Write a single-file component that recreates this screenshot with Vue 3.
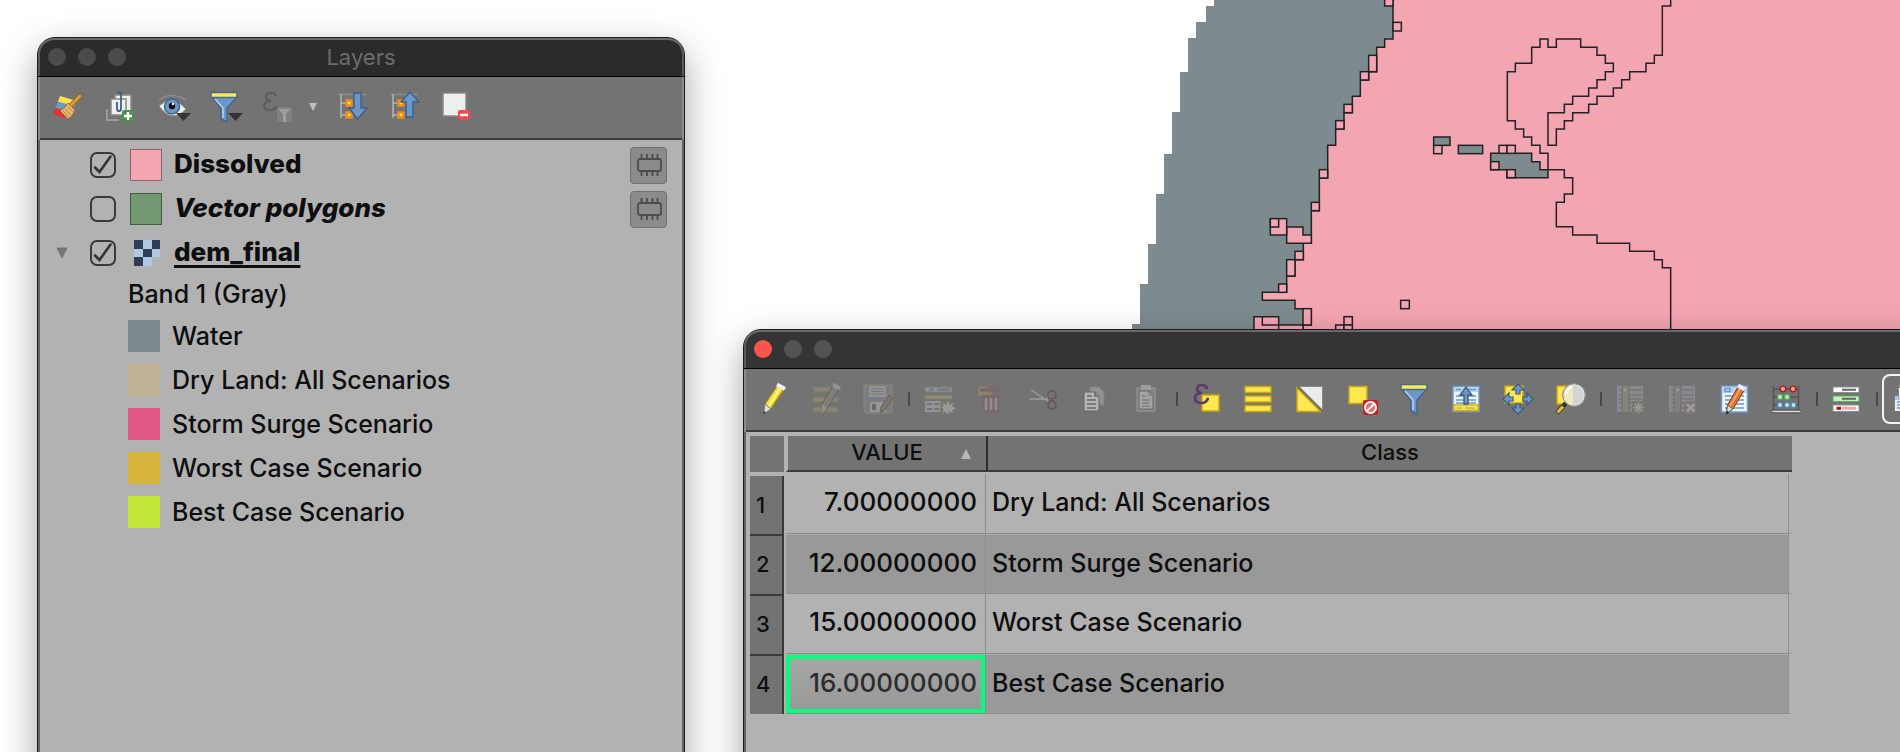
<script setup>
import { ref } from 'vue'

const layers = ref([
  { name: 'Dissolved', on: true, fill: '#f4a5b2', kind: 'solid', temp: true },
  { name: 'Vector polygons', on: false, fill: '#72996f', kind: 'empty', temp: true },
  { name: 'dem_final', on: true, kind: 'raster', temp: false }
])

const classes = [
  { label: 'Water', color: '#7d8b8f' },
  { label: 'Dry Land: All Scenarios', color: '#beb297' },
  { label: 'Storm Surge Scenario', color: '#e15989' },
  { label: 'Worst Case Scenario', color: '#d7b43a' },
  { label: 'Best Case Scenario', color: '#c4e83a' }
]

const rows = [
  { value: '7.00000000', name: 'Dry Land: All Scenarios' },
  { value: '12.00000000', name: 'Storm Surge Scenario' },
  { value: '15.00000000', name: 'Worst Case Scenario' },
  { value: '16.00000000', name: 'Best Case Scenario' }
]
const current = 3

const shoreCells = [
  [854, -8, 25, 26], [879, 67, 25, 26], [806, 166, 24, 49], [781, 215, 25, 25],
  [732, 313, 25, 25], [707, 362, 25, 25], [658, 509, 25, 25], [634, 607, 24, 25],
  [585, 754, 25, 25], [560, 779, 25, 49], [536, 852, 24, 25], [902, 901, 26, 25],
  [732, 950, 25, 25], [707, 975, 25, 25], [732, 975, 25, 25], [609, 926, 25, 49],
  [511, 656, 49, 49], [511, 656, 25, 25], [1001, 436, 25, 25]
]
const lakeCells = [[272, 485, 25, 24], [321, 509, 25, 24], [297, 436, 24, 24], [321, 436, 25, 24]]
</script>

<template>
  <main class="desktop">
    <svg class="map" aria-hidden="true">
      <g transform="translate(1100 0) scale(0.33333)" stroke-width="4.5">
        <path fill="#7d8b8e" d="M342 0V18H318V66H288V114H264V216H240V336H216V462H192V582H168V732H144V852H120V972H96V1100H900V0Z" />
        <path class="land" d="M879 -10V117H854V142H830V215H806V240H781V289H757V338H732V387H707V436H683V534H658V632H634V730H610V779H585V828H560V877H487V901H585V926H634V975H609V1100H9000V-10Z" />
        <path class="land" d="M560 681H609V705H634V730H560Z" />
        <path class="land" d="M462 1100V950H536V975H609V1100" />
        <path class="line" d="M487 950V975H536V1100" />
        <rect v-for="(c, i) in shoreCells" :key="i" class="land" :x="c[0]" :y="c[1]" :width="c[2]" :height="c[3]" />
        <rect class="lake" x="1001" y="411" width="49" height="25" />
        <rect class="lake" x="1075" y="436" width="73" height="25" />
        <g transform="translate(900 0)">
          <path class="lake" d="M272 460H395V485H420V509H444V533H321V509H272Z" />
          <rect v-for="(c, i) in lakeCells" :key="i" class="land" :x="c[0]" :y="c[1]" :width="c[2]" :height="c[3]" />
          <path class="line" d="M444 509V460H420V436H395V411H371V387H346V362H322V215H346V190H395V142H420V117H444V142H469V117H542V142H591V166H616V190H640V215H616V239H591V264H566V289H518V313H493V338H444V436H469V387H493V362H518V338H566V313H591V289H640V264H665V239H689V215H738V190H763V166H787V18H812V-5" />
          <path class="line" d="M444 509H493V533H518V582H493V607H469V680H518V705H591V730H689V754H763V779H787V803H812V1100" />
        </g>
      </g>
    </svg>

    <section class="window layers" aria-label="Layers">
      <header class="title">
        <span class="lights"><i></i><i></i><i></i></span>
        <h1>Layers</h1>
      </header>
      <div class="tools" role="toolbar" aria-label="Layer tools">
        <button type="button" aria-label="Open layer styling">
          <svg viewBox="0 0 32 32">
            <path d="M8 5 25 10 22 15 6 11Z" fill="#fbe44a" />
            <path d="M6 11 22 15 18 21 3 17Z" fill="#6d97c8" />
            <path d="M3 17 16 20 13 27 1 23Z" fill="#e8302c" />
            <path d="M28 5 19 14" stroke="#9a5d14" stroke-width="4.5" stroke-linecap="round" />
            <path d="M28 5 19 14" stroke="#dfa040" stroke-width="2.5" stroke-linecap="round" />
            <path d="M16 12 23 19 20 25 16 28 8 20 12 17Z" fill="#e6b673" stroke="#9a682c" />
            <path d="M13 18 19 24M11 20 17 26M16 16 21 21" stroke="#b98543" />
          </svg>
        </button>
        <button type="button" aria-label="Add group">
          <svg viewBox="0 0 32 32">
            <path d="M3 18V29H15" fill="none" stroke="#9c9c94" stroke-width="2" />
            <path d="M11 4H27V20H11Z" fill="#eee" stroke="#8a8a82" stroke-width="1.5" />
            <path d="M7 8H22V24H7Z" fill="#efefed" stroke="#8a8a82" stroke-width="1.5" />
            <path d="M13 11V18Q13 20 15 20T17 18V3Q17 1 15.500 1T14 3" fill="none" stroke="#3d5f8a" stroke-width="1.800" />
            <rect x="18" y="19" width="12" height="12" rx="2" fill="#4c9152" />
            <path d="M24 21V29M20 25H28" stroke="#fff" stroke-width="2.500" />
          </svg>
        </button>
        <button type="button" aria-label="Manage map themes">
          <svg viewBox="0 0 32 32">
            <path d="M3 9Q15 0 30 9" fill="none" stroke="#8f8f88" stroke-width="1.500" />
            <path d="M3 15Q16 2 30 18Q16 33 3 15Z" fill="#f0f0ee" stroke="#8a8a86" />
            <circle cx="16" cy="15.500" r="7.500" fill="#6d97c8" stroke="#3d6394" stroke-width="1.500" />
            <circle cx="16" cy="15" r="3.200" fill="#0b0b0b" /><circle cx="17" cy="13" r="1.200" fill="#fff" />
            <path d="M20 22H35L27.500 30Z" fill="#333" />
          </svg>
        </button>
        <button type="button" aria-label="Filter legend">
          <svg viewBox="0 0 32 32">
            <path d="M4 6H29L19 17V31L13 28V17Z" fill="#6d97c8" stroke="#3f6592" stroke-width="1.500" />
            <path d="M7 8 15 17V27" fill="none" stroke="#b8d2ee" stroke-width="1.500" />
            <rect x="3" y="1.500" width="26" height="5" fill="#fde94f" stroke="#48698f" stroke-width="1.500" />
            <path d="M20 22H35L27.500 30Z" fill="#333" />
          </svg>
        </button>
        <button type="button" aria-label="Filter legend by expression" disabled>
          <svg viewBox="0 0 32 32">
            <path d="M16 5Q15 2 11 2Q6 2 6 6Q6 9 11 10Q4 10 4 14.500Q4 19 10 19Q15 19 17 15" fill="none" stroke="#5c5c5c" stroke-width="2" />
            <rect x="17" y="16" width="15" height="15" rx="2" fill="#808080" />
            <path d="M18.500 18H30.500L26 23V31H23V23Z" fill="#a0a0a0" />
          </svg>
        </button>
        <button type="button" class="drop" aria-label="Filter options">
          <svg viewBox="0 0 10 10"><path d="M1 1H9L5 9Z" fill="#c0c0c0" /></svg>
        </button>
        <button type="button" aria-label="Expand all">
          <svg viewBox="0 0 32 32">
            <path d="M0 3.500H28" stroke="#8e8e88" stroke-width="1.500" />
            <path d="M3 3V27M3 12H9M3 24H9" fill="none" stroke="#b4b4b0" stroke-width="1.500" />
            <path d="M8.500 9.500H13.500V14.500H8.500ZM8.500 21.500H13.500V26.500H8.500Z" fill="#fde94f" stroke="#f48c1c" stroke-width="2.500" />
            <path d="M16 2H23V17H29L19.500 28 11 17H16Z" fill="#6d97c8" stroke="#3c608c" stroke-width="1.500" />
          </svg>
        </button>
        <button type="button" aria-label="Collapse all">
          <svg viewBox="0 0 32 32">
            <path d="M0 3.500H28" stroke="#8e8e88" stroke-width="1.500" />
            <path d="M3 3V27M3 12H9M3 24H9" fill="none" stroke="#b4b4b0" stroke-width="1.500" />
            <path d="M8.500 9.500H13.500V14.500H8.500ZM8.500 21.500H13.500V26.500H8.500Z" fill="#fde94f" stroke="#f48c1c" stroke-width="2.500" />
            <path d="M16 26H23V11H29L20 1 11 11H16Z" fill="#6d97c8" stroke="#3c608c" stroke-width="1.500" />
          </svg>
        </button>
        <button type="button" aria-label="Remove layer">
          <svg viewBox="0 0 32 32">
            <rect x="1" y="2" width="23" height="23" fill="#efefed" stroke="#8a8a82" stroke-width="1.500" />
            <rect x="16" y="19" width="12" height="10" rx="2" fill="#ef4b50" />
            <path d="M18 24H26" stroke="#fff" stroke-width="2.500" />
          </svg>
        </button>
      </div>

      <div class="body">
        <ul class="tree">
          <li v-for="layer in layers" :key="layer.name" class="layer">
            <span class="twist">
              <svg v-if="layer.kind === 'raster'" viewBox="0 0 12 12"><path d="M1 1H11L6 11Z" fill="#757575" stroke="#757575" stroke-linejoin="round" /></svg>
            </span>
            <label :class="layer.kind">
              <span class="check">
                <input v-model="layer.on" type="checkbox" />
                <svg v-if="layer.on" viewBox="0 0 26 26"><path d="M5 15.500 9.500 20 20.500 4.500" fill="none" stroke="#333" stroke-width="2.600" stroke-linecap="round" /></svg>
              </span>
              <svg v-if="layer.kind === 'raster'" class="swatch" viewBox="0 0 32 32" shape-rendering="crispEdges">
                <rect x="4" y="3" width="26" height="26" fill="#aec8e6" />
                <path d="M4 3H13V12H4ZM22 3H30V12H22ZM13 12H22V20H13ZM4 20H13V29H4Z" fill="#2e3e52" />
                <path d="M22 20H30V29H22Z" fill="#b2b2b2" />
              </svg>
              <span v-else class="swatch framed" :style="{ background: layer.fill }"></span>
              <b>{{ layer.name }}</b>
            </label>
            <button v-if="layer.temp" type="button" class="chip" aria-label="Temporary scratch layer">
              <svg viewBox="0 0 26 24">
                <rect x="2" y="6" width="23" height="12" rx="2" fill="none" stroke="#4c4c4c" stroke-width="1.800" />
                <path d="M5.500 1V5M11 1V5M16.500 1V5M21.500 1V5M5.500 19V23M11 19V23M16.500 19V23M21.500 19V23" stroke="#4c4c4c" stroke-width="1.800" />
              </svg>
            </button>
          </li>
        </ul>
        <p class="band">Band 1 (Gray)</p>
        <ul class="legend">
          <li v-for="c in classes" :key="c.label">
            <span class="swatch" :style="{ background: c.color }"></span>{{ c.label }}
          </li>
        </ul>
      </div>
    </section>

    <section class="window attributes" aria-label="Attribute table">
      <header class="title">
        <span class="lights"><i class="close"></i><i></i><i></i></span>
      </header>
      <div class="tools" role="toolbar" aria-label="Table tools">
        <button type="button" aria-label="Toggle editing">
          <svg viewBox="0 0 32 32">
            <path d="M19 3 26 7 13 26 5.500 31 7 21Z" fill="#f2dc3c" stroke="#8a7a1c" />
            <path d="M22 5.500 10 24" stroke="#fff48e" stroke-width="2" /><path d="M25 7 13 25" stroke="#a89418" stroke-width="1" />
            <path d="M7 21 13 26 5.500 31Z" fill="#e4e0d8" stroke="#777" /><path d="M6 28 8 29.500 5 31.500Z" fill="#333" />
            <path d="M19 1.500 27 6" stroke="#f0f0f4" stroke-width="4" />
          </svg>
        </button>
        <button type="button" aria-label="Multi edit" disabled>
          <svg viewBox="0 0 32 32" class="dim">
            <path d="M3 4H28V9H3ZM3 14H28V19H3ZM3 24H28V29H3Z" fill="#b7ab72" stroke="#8e8350" />
            <path d="M23 3 29 6 17 26 11 31 12 21Z" fill="#a58f88" stroke="#41342f" /><path d="M12 21 17 26 11 31Z" fill="#ccc" />
            <path d="M23 1.500 30 5.500" stroke="#ddd" stroke-width="4" />
          </svg>
        </button>
        <button type="button" aria-label="Save edits" disabled>
          <svg viewBox="0 0 32 32" class="dim">
            <path d="M2 2H30V30H4L2 28Z" fill="#8796a4" stroke="#c7bd6a" />
            <path d="M7 3H24V14H7Z" fill="#d4d4d4" /><path d="M9 6H22M9 8.500H22M9 11H22" stroke="#888" />
            <path d="M8 19H24V29H8Z" fill="#ddd" /><path d="M10 21H14V27H10Z" fill="#555" />
            <path d="M27 12 31 15 23 27 18 30 19 24Z" fill="#a57060" stroke="#4f372f" />
          </svg>
        </button>
        <span class="sep"></span>
        <button type="button" aria-label="Add feature" disabled>
          <svg viewBox="0 0 32 32" class="dim">
            <path d="M3 4H30V9H3Z" fill="#c9d8e4" stroke="#7e95a8" /><path d="M7 6.500H12M15 6.500H28" stroke="#657d91" stroke-width="2" />
            <path d="M3 12H30V16H3Z" fill="#cfc67c" stroke="#998d4a" />
            <path d="M3 18H30V29H3Z" fill="#d5dee6" /><path d="M5 21H10M12 21H17M5 26H10M12 26H17" stroke="#68798a" stroke-width="2" />
            <rect x="18" y="18" width="14" height="13" rx="2" fill="#8f845a" />
            <path d="M26 18 27.500 22 31 20 30 24 35 25 30 27 31 30 27 28 25 32 24 28 20 30 22 26 19 24 22 23 21 20 24 22Z" fill="#eee" />
          </svg>
        </button>
        <button type="button" aria-label="Delete selected" disabled>
          <svg viewBox="0 0 32 32" class="dim">
            <path d="M4 3H18V13H4Z" fill="#b6a768" stroke="#8b7b3c" />
            <path d="M6 7H28" stroke="#8f5050" stroke-width="3" /><path d="M13 4.500H22" stroke="#8f5050" stroke-width="2" />
            <path d="M8 12H26L24 30H9Z" fill="#8c5858" /><path d="M12 15V27M17 15V27M22 15V27" stroke="#d8c4c4" stroke-width="2.500" />
          </svg>
        </button>
        <button type="button" aria-label="Cut" disabled>
          <svg viewBox="0 0 32 32" class="half">
            <path d="M5 7 23 19M3 16H21L24 13" fill="none" stroke="#b8b8b8" stroke-width="1.500" />
            <circle cx="26" cy="12" r="4" fill="none" stroke="#65494d" stroke-width="2" />
            <circle cx="26" cy="22" r="4" fill="none" stroke="#65494d" stroke-width="2" />
          </svg>
        </button>
        <button type="button" aria-label="Copy" disabled>
          <svg viewBox="0 0 32 32" class="half">
            <path d="M12 4H21L26 9V22H12Z" fill="#a8a8a8" stroke="#8a8a8a" />
            <path d="M6 9H17L21 13V28H6Z" fill="#dedede" stroke="#5e5e5e" />
            <path d="M17 9V13H21M9 13H14M9 17H18M9 21H18M9 25H18" fill="none" stroke="#606060" stroke-width="1.500" />
          </svg>
        </button>
        <button type="button" aria-label="Paste" disabled>
          <svg viewBox="0 0 32 32" class="half">
            <path d="M7 5H25V28H7Z" fill="#8b8b8b" stroke="#b8b8b8" /><path d="M11 2H21V7H11Z" fill="#b8b8b8" />
            <path d="M9 8H19L23 12V26H9Z" fill="#c6c6c6" stroke="#666" />
            <path d="M19 8V12H23M12 13H16M12 17H20M12 20H19M12 23H20" fill="none" stroke="#666" />
          </svg>
        </button>
        <span class="sep"></span>
        <button type="button" aria-label="Select by expression">
          <svg viewBox="0 0 32 32">
            <rect x="12" y="12" width="17" height="16" fill="#fde94f" stroke="#c9a413" stroke-width="1.500" />
            <path d="M17 5Q16 2 12 2Q7 2 7 6Q7 9.500 12 10Q5 10 5 15Q5 20 11 20Q17 20 18 15" fill="none" stroke="#5e3868" stroke-width="2.500" />
            <path d="M15 5H18M16 18 18.500 15" stroke="#5e3868" stroke-width="2" />
          </svg>
        </button>
        <button type="button" aria-label="Select all">
          <svg viewBox="0 0 32 32">
            <path d="M3 3.500H29V9.500H3ZM3 13H29V19H3ZM3 22.500H29V28.500H3Z" fill="#fde94f" stroke="#c9a413" stroke-width="1.500" />
          </svg>
        </button>
        <button type="button" aria-label="Invert selection">
          <svg viewBox="0 0 32 32">
            <path d="M5 3.500H28.500V27Z" fill="#ececec" stroke="#8a8a8a" /><path d="M3 3 28.500 28.500" stroke="#66665f" stroke-width="1.500" />
            <path d="M3 5V28.500H26.500Z" fill="#fde94f" stroke="#c9a413" stroke-width="1.500" />
          </svg>
        </button>
        <button type="button" aria-label="Deselect all">
          <svg viewBox="0 0 32 32">
            <rect x="3" y="3.500" width="18" height="17" fill="#fde94f" stroke="#c9a413" stroke-width="1.500" />
            <rect x="17" y="17" width="15" height="15" rx="2" fill="#cf1d20" />
            <circle cx="24.500" cy="24.500" r="5.500" fill="#e46c6c" stroke="#fff" stroke-width="2" /><path d="M21 28 28 21" stroke="#fff" stroke-width="2" />
          </svg>
        </button>
        <button type="button" aria-label="Filter selection">
          <svg viewBox="0 0 32 32">
            <path d="M4 6H29L19 17V31L13 28V17Z" fill="#6d97c8" stroke="#3f6592" stroke-width="1.500" />
            <path d="M7 8 15 17V27" fill="none" stroke="#b8d2ee" stroke-width="1.500" />
            <rect x="3" y="1.500" width="26" height="5" fill="#fde94f" stroke="#48698f" stroke-width="1.500" />
          </svg>
        </button>
        <button type="button" aria-label="Move selection to top">
          <svg viewBox="0 0 32 32">
            <rect x="3" y="3.500" width="26" height="25" fill="#eef3f8" stroke="#6d9bcd" stroke-width="1.500" />
            <path d="M4 4.500H28V9H4Z" fill="#b7d3ee" /><path d="M6 6.500H11M19 6.500H26M6 13H26M6 17H26M6 20H26" stroke="#6d9bcd" stroke-width="1.500" />
            <rect x="4" y="22" width="24" height="5.500" fill="#fde94f" stroke="#d9ae12" stroke-width="1.500" /><path d="M7 25H12M15 25H25" stroke="#8e9c78" />
            <path d="M14 21V12H10L16 4 22 12H18V21Z" fill="#6d97c8" stroke="#3c5878" stroke-width="1.300" />
          </svg>
        </button>
        <button type="button" aria-label="Pan to selected">
          <svg viewBox="0 0 32 32">
            <rect x="3" y="3" width="18" height="17" fill="#fde94f" stroke="#c9a413" stroke-width="1.500" />
            <path d="M16 1 22 7H18V11H14V7H10ZM16 31 22 25H18V21H14V25H10ZM1 16 7 10V14H11V18H7V22ZM31 16 25 10V14H21V18H25V22Z" fill="#6d97c8" stroke="#3a5a80" stroke-width="1.200" />
          </svg>
        </button>
        <button type="button" aria-label="Zoom to selected">
          <svg viewBox="0 0 32 32">
            <rect x="3" y="3" width="17" height="18" fill="#fde94f" stroke="#c9a413" stroke-width="1.500" />
            <path d="M12 20 3 30" stroke="#3a3020" stroke-width="4.500" /><path d="M9 23.500 3.500 29.500" stroke="#f2b93c" stroke-width="3" />
            <circle cx="20" cy="12" r="10.800" fill="#d4d4d2" stroke="#ececec" stroke-width="1.500" />
            <path d="M19 2V22Q10 20 10 12T19 2Z" fill="#efe9c4" /><path d="M12 11Q13 5 18 4" fill="none" stroke="#fff" stroke-width="2.500" />
            <circle cx="20" cy="12" r="11.300" fill="none" stroke="#777" />
          </svg>
        </button>
        <span class="sep"></span>
        <button type="button" aria-label="New field" disabled>
          <svg viewBox="0 0 32 32" class="dim">
            <path d="M3 3H29V29H3Z" fill="#b4bcc4" /><path d="M5 7H28M5 12H28M5 16H28M5 20H28M5 25H28" stroke="#77828c" stroke-width="1.500" />
            <path d="M8 2H15V30H8Z" fill="#b0a888" stroke="#625d44" /><circle cx="11.500" cy="7" r="1.500" fill="#eee" />
            <rect x="18" y="18" width="13" height="13" rx="2" fill="#84795a" />
            <path d="M24.500 19V30M19 24.500H30M20.500 20.500 28.500 28.500M28.500 20.500 20.500 28.500" stroke="#eee" stroke-width="1.500" />
          </svg>
        </button>
        <button type="button" aria-label="Delete field" disabled>
          <svg viewBox="0 0 32 32" class="dim">
            <path d="M3 3H29V29H3Z" fill="#b4bcc4" /><path d="M5 7H28M5 12H28M5 16H28M5 20H28M5 25H28" stroke="#77828c" stroke-width="1.500" />
            <path d="M8 2H15V30H8Z" fill="#a89696" stroke="#7a6060" /><circle cx="11.500" cy="7" r="1.500" fill="#eee" />
            <rect x="18" y="18" width="13" height="13" rx="2" fill="#957e7a" />
            <path d="M21 21 28.500 28.500M28.500 21 21 28.500" stroke="#eee" stroke-width="3" />
          </svg>
        </button>
        <button type="button" aria-label="Field calculator list">
          <svg viewBox="0 0 32 32">
            <rect x="3.500" y="3" width="26" height="26" fill="#f0f4f8" stroke="#6d9bcd" stroke-width="1.500" />
            <path d="M4.500 4H29V10H4.500Z" fill="#b7d3ee" /><path d="M7 5.500H12V8.500H7ZM23 7H27M7 13H26M7 17H26M7 21H26M7 25H26" fill="none" stroke="#6d9bcd" stroke-width="1.500" />
            <path d="M20 4 26 7.500 15 26 8.500 30.500 9.500 22Z" fill="#dd7434" stroke="#7a3d18" /><path d="M22 6 11.500 24" stroke="#f4a878" stroke-width="1.500" />
            <path d="M9.500 22 15 26 8.500 30.500Z" fill="#ddd8d0" stroke="#666" /><path d="M9 28 11 29.500 8 31.500Z" fill="#111" />
            <path d="M20 2.500 27 6.500" stroke="#eee" stroke-width="4" />
          </svg>
        </button>
        <button type="button" aria-label="Open field calculator">
          <svg viewBox="0 0 32 32">
            <path d="M3.500 3V28M28.500 3V28M3 6H29M3 14H29M3 22H29" stroke="#555" stroke-width="1.500" />
            <g stroke-width="1.300"><g fill="#f49a9a" stroke="#b01418"><circle cx="13" cy="6" r="2.800" /><circle cx="23" cy="6" r="2.800" /></g>
              <g fill="#b4f2b4" stroke="#5da85f"><circle cx="10" cy="14" r="2.600" /><circle cx="17" cy="14" r="2.600" /></g>
              <g fill="#bfe0f6" stroke="#4f85b4"><circle cx="10" cy="22" r="2.600" /><circle cx="17" cy="22" r="2.600" /><circle cx="23.500" cy="22" r="2.600" /></g></g>
            <path d="M2 28.500H31" stroke="#555" stroke-width="4" /><path d="M2.500 28.500H30.500" stroke="#ddd" stroke-width="1.500" />
          </svg>
        </button>
        <span class="sep"></span>
        <button type="button" aria-label="Conditional formatting">
          <svg viewBox="0 0 32 32">
            <path d="M3 4H29V9.500H3Z" fill="#fff" stroke="#8f8f8f" /><path d="M12 6.700H26" stroke="#636363" stroke-width="2" />
            <path d="M3 13H29V18.500H3Z" fill="#bdf5bb" stroke="#5fae60" /><path d="M12 15.700H26" stroke="#636363" stroke-width="2" />
            <path d="M3 22H29V28.500H3Z" fill="#fff" stroke="#8f8f8f" /><path d="M12 25.300H26" stroke="#f6a6a6" stroke-width="3" /><path d="M6.500 25.300H11" stroke="#a80d10" stroke-width="3" />
          </svg>
        </button>
        <span class="sep"></span>
        <button type="button" class="on" aria-label="Dock attribute table" aria-pressed="true">
          <svg viewBox="0 0 32 32">
            <path d="M5 2V13H1V28" fill="none" stroke="#8d8d8d" />
            <path d="M5 5H30V13H5Z" fill="#fff" /><path d="M1 14H30V28H1Z" fill="#e9eff5" />
            <path d="M1 13H30V17H1Z" fill="#a9c9e8" /><path d="M3 19H12M3 22H12M3 25H12" stroke="#6d9bcd" stroke-width="1.500" />
          </svg>
        </button>
      </div>
      <div class="body">
        <table>
          <colgroup><col class="c-num" /><col class="c-value" /><col /></colgroup>
          <thead>
            <tr>
              <td class="corner"></td>
              <th scope="col" class="h-value">VALUE<svg class="sort" viewBox="0 0 10 10"><path d="M0 10 5 0 10 10Z" fill="#b8b8b8" /></svg></th>
              <th scope="col" class="h-class">Class</th>
            </tr>
          </thead>
          <tbody>
            <tr v-for="(row, i) in rows" :key="row.value">
              <th scope="row">{{ i + 1 }}</th>
              <td class="value" :class="{ current: i === current }">{{ row.value }}</td>
              <td class="name">{{ row.name }}</td>
            </tr>
          </tbody>
        </table>
      </div>
    </section>
  </main>
</template>

<style>
body { margin: 0; overflow: hidden; }
</style>

<style scoped>
* { box-sizing: border-box; }
.desktop {
  position: relative;
  height: 100vh;
  overflow: hidden;
  background: #fff;
  color: #0e0e0e;
  font-family: Inter, "Liberation Sans", sans-serif;
  font-size: 25px;
  font-weight: 500;
}
.map { position: absolute; inset: 0; width: 100%; height: 100%; }
.land { fill: #f4a5b2; stroke: #222; }
.lake { fill: #7d8b8e; stroke: #222; }
.line { fill: none; stroke: #222; }

.window {
  position: absolute;
  display: flex;
  flex-direction: column;
  border: 1px solid #1c1c1c;
  border-radius: 18px 18px 0 0;
  background: #b2b2b2;
  overflow: hidden;
  box-shadow: 0 14px 36px rgba(0, 0, 0, 0.36);
}
.layers { left: 37px; top: 37px; bottom: -40px; width: calc(34% + 2px); }
.attributes { left: 743px; top: 329px; right: -40px; bottom: -40px; }

.title {
  display: grid;
  grid-template-columns: 1fr auto 1fr;
  align-items: center;
  height: 39px;
  padding: 0 10px;
  border-bottom: 1px solid #000;
  border-radius: 17px 17px 0 0;
  background: #2b2b2b;
  box-shadow: inset 0 2px 0 #6a6a6a, inset 2px 0 0 #5a5a5a, inset -2px 0 0 #5a5a5a;
}
.attributes .title { background: #343434; }
.title h1 { margin: 0; font-size: 22px; font-weight: 400; line-height: 36px; color: #6c6c6c; }
.lights { display: flex; gap: 12px; }
.lights i { width: 18px; height: 18px; border-radius: 50%; background: #4b4b4b; }
.attributes .lights i { background: #535353; }
.attributes .lights .close { background: #ff534d; }

.tools {
  display: flex;
  align-items: center;
  height: 63px;
  padding: 0 2px 4px;
  border: solid #8b8b8b;
  border-width: 0 2px;
  background: #737373;
  box-shadow: inset 0 -2px 0 #3b3b3b;
}
.tools button {
  flex: none;
  display: grid;
  place-items: center;
  width: 52px;
  height: 50px;
  padding: 0;
  border: 0;
  background: none;
}
.tools button svg { width: 32px; height: 32px; overflow: visible; }
.tools .drop { width: 26px; }
.tools .drop svg { width: 10px; height: 10px; margin-right: 4px; }
.tools .on { justify-items: start; padding-left: 10px; border: 2px solid #f4f4f4; border-radius: 8px; margin-left: 2px; }
.sep { flex: none; width: 2px; height: 14px; margin: 0 2px 0 4px; background: #4a4a4a; }
.dim { opacity: 0.32; }
.half { opacity: 0.6; }

.body { flex: 1; border-left: 2px solid #646464; border-right: 2px solid #646464; }
.tree, .legend { margin: 0; padding: 0; list-style: none; }
.tree { padding-top: 3px; }
.layer { display: flex; align-items: center; height: 44px; padding-right: 15px; }
.twist { display: grid; place-items: center; width: 44px; }
.twist svg { width: 12px; height: 12px; }
.layer label { flex: 1; display: flex; align-items: center; margin-left: 6px; }
.layer b { font-size: 26px; font-weight: 800; line-height: 40px; padding-bottom: 2px; margin-left: 12px; }
.layer .empty b { font-style: italic; }
.layer .raster b { text-decoration: underline; text-decoration-thickness: 3px; text-underline-offset: 4px; text-decoration-skip-ink: none; }
.check { display: grid; margin-right: 14px; }
.check > * { grid-area: 1 / 1; width: 26px; height: 26px; }
.check input { appearance: none; margin: 0; border: 2px solid #3a3a3a; border-radius: 7px; }
.check svg { pointer-events: none; }
.swatch { flex: none; width: 32px; height: 32px; }
.framed { border: 1px solid rgba(0, 0, 0, 0.4); }
.chip {
  display: grid;
  place-items: center;
  width: 37px;
  height: 37px;
  padding: 0;
  border: 1px solid #707070;
  border-radius: 4px;
  background: #8b8b8b;
}
.chip svg { width: 26px; height: 24px; }
.band { margin: 0; padding-left: 88px; height: 39px; line-height: 38px; }
.legend li { display: flex; align-items: center; gap: 12px; height: 44px; padding-left: 88px; line-height: 44px; }

.attributes .body { padding: 4px 145px 0 4px; }
table { width: 100%; border-spacing: 0; table-layout: fixed; }
.c-num { width: 36px; }
.c-value { width: 200px; }
td, th { padding: 0; }
thead th {
  height: 36px;
  border-bottom: 2px solid #3a3a3a;
  background: #737373;
  font-size: 22px;
  font-weight: 500;
  line-height: 30px;
  padding-bottom: 3px;
}
.corner { background: #737373; border-right: 2px solid #b2b2b2; }
.h-value { position: relative; border-left: 2px solid #b2b2b2; }
.h-class { border-left: 2px solid #2e2e2e; }
.sort { position: absolute; right: 15px; bottom: 11px; width: 10px; height: 10px; }
tbody::before { content: ""; display: block; height: 2px; }
tbody td, tbody th { height: 60px; line-height: 54px; }
tbody th {
  background:
    linear-gradient(#3a3a3a, #3a3a3a) 0 0 / 34px 2px no-repeat,
    linear-gradient(90deg, #737373 32px, #3a3a3a 32px 34px, #b2b2b2 34px);
  font-size: 22px;
  font-weight: 500;
  text-align: left;
  padding-left: 6px;
}
tbody tr:first-child th { border-top: 2px solid #b2b2b2; background-clip: padding-box; }
tbody tr:first-child th { background: linear-gradient(90deg, #737373 32px, #3a3a3a 32px 34px, #b2b2b2 34px); }
tbody td { border-bottom: 1px solid #8e8e8e; padding-bottom: 3px; }
tbody tr:nth-child(even) td { background-color: #999; border-top: 1px solid #aaa; }
.value { font-size: 26px; text-align: right; padding-right: 8px; border-right: 1px solid #8e8e8e; }
.name { padding-left: 6px; border-right: 3px solid #b2b2b2; background-clip: padding-box; box-shadow: inset -1px 0 #909090; }
tbody tr .current {
  background: linear-gradient(#a8a8a8, #979797);
  box-shadow: inset 0 0 0 4px #00ff7f;
  color: #2c2c2c;
}
</style>
